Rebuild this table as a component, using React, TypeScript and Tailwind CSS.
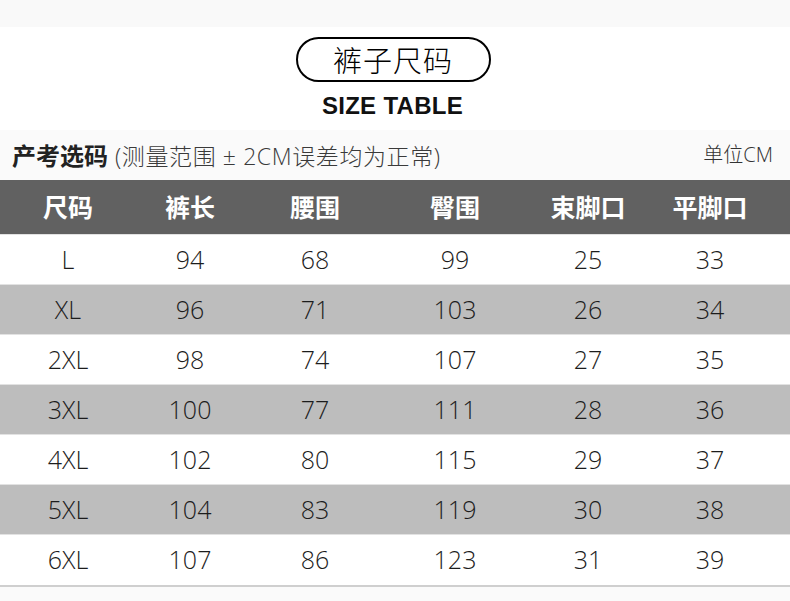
const rows = [
  ["L", "94", "68", "99", "25", "33"],
  ["XL", "96", "71", "103", "26", "34"],
  ["2XL", "98", "74", "107", "27", "35"],
  ["3XL", "100", "77", "111", "28", "36"],
  ["4XL", "102", "80", "115", "29", "37"],
  ["5XL", "104", "83", "119", "30", "38"],
  ["6XL", "107", "86", "123", "31", "39"],
];

const heads = ["尺码", "裤长", "腰围", "臀围", "束脚口", "平脚口"];

const cols = "grid grid-cols-[136px_108px_142px_138px_128px_116px]";

export default function App() {
  return (
    <div className="w-[790px] h-[601px] overflow-hidden bg-[#fafafa] font-['Liberation_Sans','Noto_Sans_CJK_SC',sans-serif] text-[#1c1c1c]">
      {/* Title block */}
      <div className="h-[27px] bg-[#f9f9f9]" />
      <div className="h-[103px] bg-white flex flex-col items-center">
        <div className="mt-[10px] ml-[-4px] w-[195px] h-[45px] rounded-full border-2 border-black flex items-center justify-center font-['Noto_Sans_CJK_SC',sans-serif] text-[29px] font-light text-black tracking-[1px]">
          裤子尺码
        </div>
        <div className="mt-[13px] ml-[-5px] text-[24px] leading-[22px] font-bold text-[#111] tracking-[0.3px]">SIZE TABLE</div>
      </div>

      {/* Info row */}
      <div className="h-[50px] flex items-center justify-between pl-[12px] pr-[17px] bg-[#fafafa]">
        <div className="flex items-baseline">
          <span className="text-[24px] font-bold text-[#222] font-['Noto_Sans_CJK_SC',sans-serif]">产考选码</span>
          <span className="ml-[7px] text-[23px] tracking-[0.6px] text-[#3a3a3a] font-['Open_Sans','Noto_Sans_CJK_SC',sans-serif] font-light">
            (测量范围 ± 2CM误差均为正常)
          </span>
        </div>
        <span className="text-[20px] text-[#333] font-['Open_Sans','Noto_Sans_CJK_SC',sans-serif] font-light">单位CM</span>
      </div>

      {/* Table */}
      <div className={`${cols} h-[54px] bg-[#616161] items-center`}>
        {heads.map((h) => (
          <div key={h} className="text-center text-white text-[25px] font-bold font-['Noto_Sans_CJK_SC',sans-serif]">
            {h}
          </div>
        ))}
      </div>
      {rows.map((r, i) => (
        <div
          key={r[0]}
          className={`${cols} h-[50px] items-center border-t border-[#e2e2e2] ${i % 2 === 1 ? "bg-[#bdbdbd]" : "bg-white"}`}
        >
          {r.map((c, j) => (
            <div key={j} className="text-center text-[25px] font-light font-['Open_Sans',sans-serif]">
              {c}
            </div>
          ))}
        </div>
      ))}
      <div className="h-[3px] bg-white border-b-2 border-[#cfcfcf]" />
    </div>
  );
}
